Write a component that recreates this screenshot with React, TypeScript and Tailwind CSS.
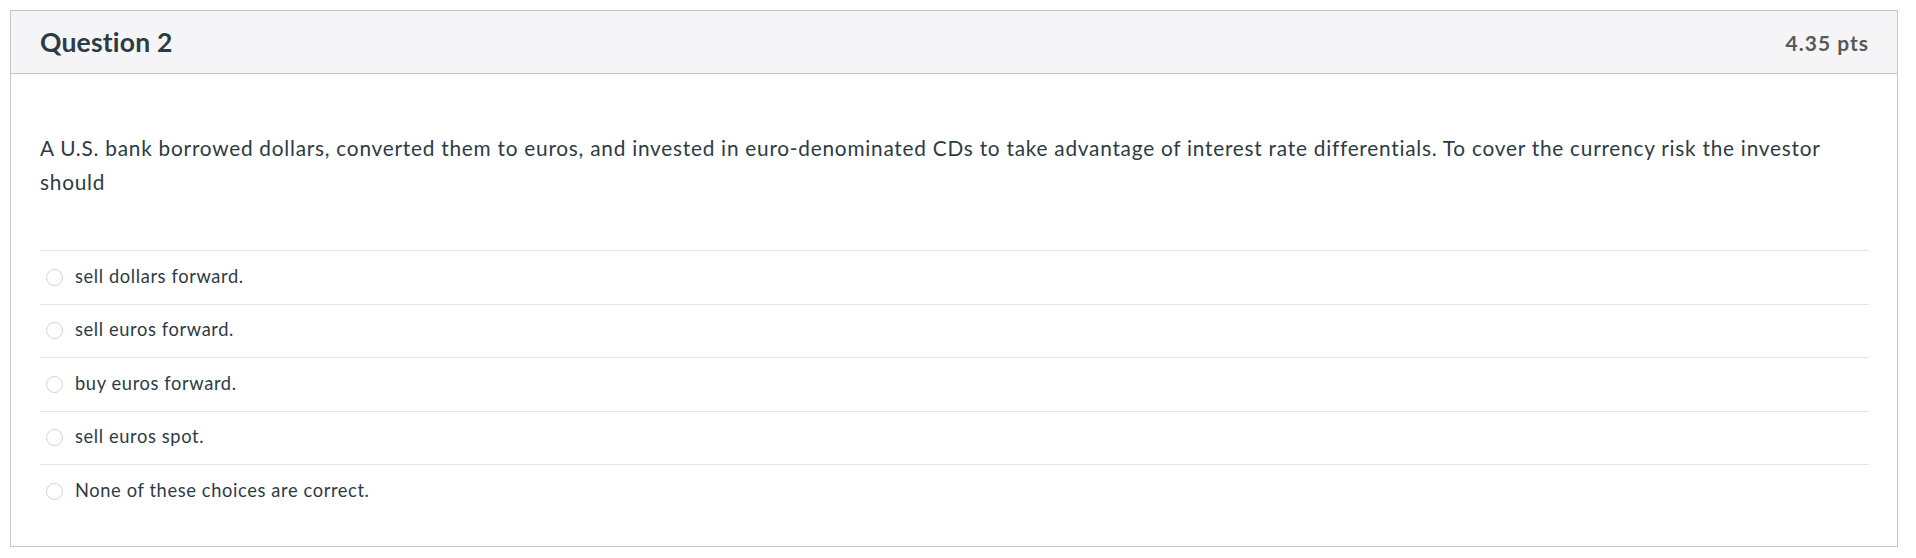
import React from "react";

const options = [
  "sell dollars forward.",
  "sell euros forward.",
  "buy euros forward.",
  "sell euros spot.",
  "None of these choices are correct.",
];

export default function App() {
  return (
    <div className="min-h-[558px] bg-white pt-[10px] pl-[10px]" style={{ fontFamily: "Lato, 'Open Sans', sans-serif" }}>
      <div className="w-[1888px] border border-[#c4c8cc] bg-white text-[#2d3b45]">
        <div className="flex h-[63px] items-center justify-between border-b border-[#c4c8cc] bg-[#f5f5f7] pl-[29px] pr-[28px]">
          <span className="text-[26.5px] font-bold leading-none tracking-[0.2px] text-[#2d3b45]">Question 2</span>
          <span className="text-[21px] font-bold leading-none tracking-[1px] text-[#595959]">4.35 pts</span>
        </div>
        <div className="pl-[29px] pr-[28px] pt-[57px] pb-[28px]">
          <p className="text-[20.8px] leading-[34px] tracking-[0.76px] text-[#2d3b45]">
            A U.S. bank borrowed dollars, converted them to euros, and invested in euro-denominated CDs to take advantage of interest rate differentials. To cover the currency risk the investor should
          </p>
          <div className="mt-[51px]">
            {options.map((o) => (
              <div key={o} className="flex h-[53.5px] items-center border-t border-[#e3e5e7]">
                <span className="ml-[6px] mr-[12px] box-border h-[17px] w-[17px] shrink-0 rounded-full border border-[#cfd3d6] bg-white" />
                <span className="-mt-[2px] text-[18.3px] leading-[21px] tracking-[0.62px] text-[#2d3b45]">{o}</span>
              </div>
            ))}
          </div>
        </div>
      </div>
    </div>
  );
}
